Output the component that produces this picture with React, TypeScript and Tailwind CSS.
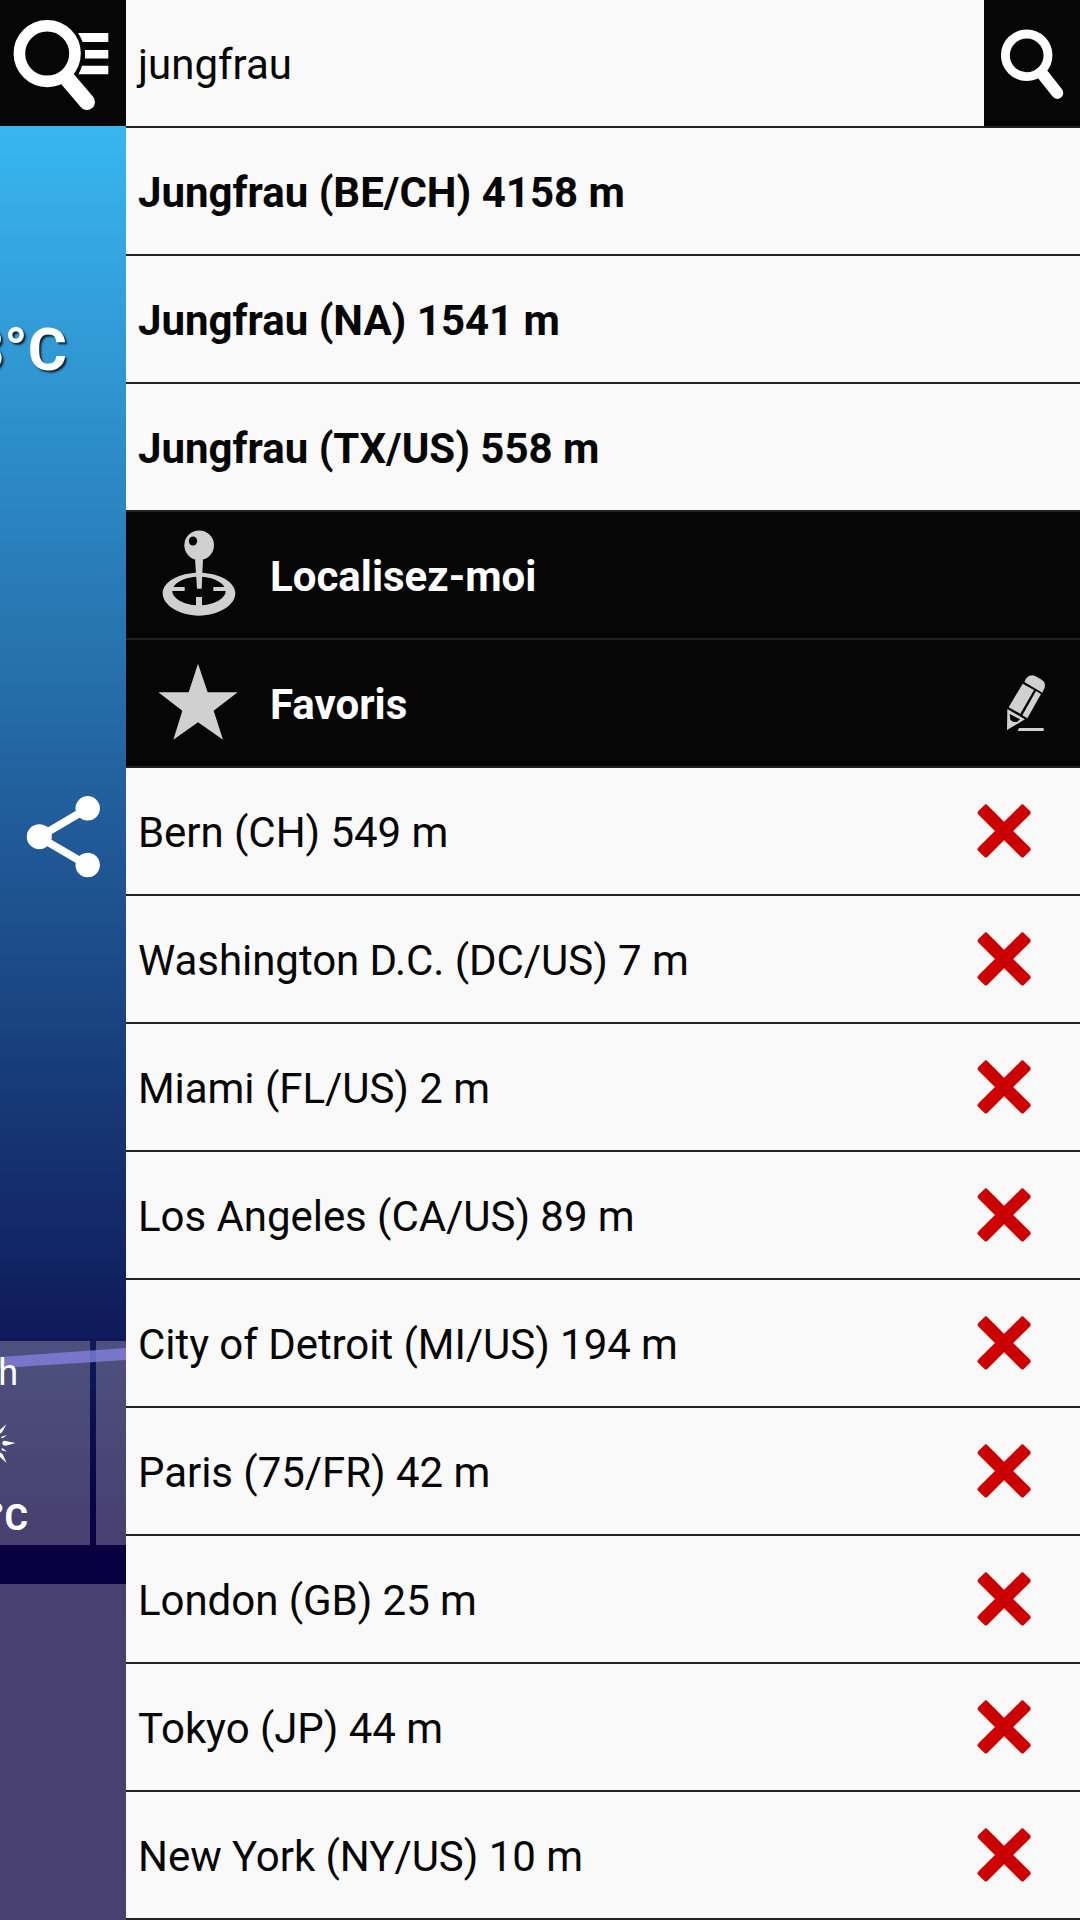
import type { ReactNode } from "react";

const results = [
  "Jungfrau (BE/CH) 4158 m",
  "Jungfrau (NA) 1541 m",
  "Jungfrau (TX/US) 558 m",
];

const favourites = [
  "Bern (CH) 549 m",
  "Washington D.C. (DC/US) 7 m",
  "Miami (FL/US) 2 m",
  "Los Angeles (CA/US) 89 m",
  "City of Detroit (MI/US) 194 m",
  "Paris (75/FR) 42 m",
  "London (GB) 25 m",
  "Tokyo (JP) 44 m",
  "New York (NY/US) 10 m",
];

function SearchListIcon() {
  return (
    <svg className="block h-[126px] w-[126px]" viewBox="0 0 126 126" fill="none">
      <circle cx="47.2" cy="53.6" r="27.8" stroke="#fff" strokeWidth="11.6" />
      <path d="M67 78.5 87 102" stroke="#fff" strokeWidth="16" strokeLinecap="round" />
      <path
        d="M78 33h30.3v9H82.6Q81 37.500 78 33ZM85 50h23.300v8.500H85ZM82 65.700h26.300v8.600H78.500Q80.800 70 82 65.700Z"
        fill="#fff"
      />
    </svg>
  );
}

function SearchIcon() {
  return (
    <svg className="block h-[126px] w-[96px]" viewBox="0 0 96 126" fill="none">
      <circle cx="42.700" cy="55.300" r="21.300" stroke="#fff" strokeWidth="8.900" />
      <path d="M58 73.500 73.300 92.900" stroke="#fff" strokeWidth="12" strokeLinecap="round" />
    </svg>
  );
}

function ShareIcon() {
  return (
    <svg className="block h-[96px] w-[126px] shrink-0" viewBox="0 0 126 96" fill="#fff">
      <path d="M87.700 19.300 39.300 48l48.400 28.300" fill="none" stroke="#fff" strokeWidth="7.800" />
      <circle cx="87.700" cy="19.300" r="12.200" />
      <circle cx="39.300" cy="47.700" r="12.500" />
      <circle cx="87.700" cy="76" r="12.200" />
    </svg>
  );
}

function LocateIcon() {
  return (
    <svg className="block h-[126px] w-[90px]" viewBox="108 36 270 378" fill="#d0d0d0">
      <path
        fillRule="evenodd"
        d="M237 218c60 0 109 27 109 62s-49 67-109 67-109-32-109-67 49-62 109-62ZM237 230c-46 0-80 21-80 43s34 43 80 43 80-21 80-43-34-43-80-43Z"
      />
      <path d="M155 261h39v12h-39ZM280 261h38v12h-38ZM228 291h18v30h-18Z" />
      <path d="M225 175h24l-4 91h-14Z" />
      <circle cx="237.500" cy="136" r="44.500" />
      <ellipse cx="219" cy="123" rx="12.500" ry="13.500" fill="#060606" />
    </svg>
  );
}

function StarIcon() {
  return (
    <svg className="block h-[126px] w-[90px]" viewBox="108 420 270 378" fill="#d0d0d0">
      <path d="M234 491 263 577H353L281 632 309 719 234 667 160 719 187 632 115 577H206Z" />
    </svg>
  );
}

function PencilIcon() {
  return (
    <svg className="block h-[126px] w-[60px]" viewBox="120 30 180 378" fill="#d0d0d0">
      <path d="M193 156 199 145Q209 132 224 137L245 149Q258 157 254 173L247 188Z" />
      <path d="M188 161 222 180 181 251 146 232Z" />
      <path d="M228 183 243 192 202 265 187 256Z" />
      <path fillRule="evenodd" d="M142 237 195 268 141 300ZM149 252 151 269 160 276 171 276 180 268Z" />
      <path d="M177 294H250Q254 298 250 303H173Z" />
    </svg>
  );
}

function DeleteIcon() {
  return (
    <svg className="block h-[126px] w-[70px]" viewBox="30 414 210 378" fill="#cc0000">
      <g transform="translate(132.500 603)">
        <rect x="-97" y="-19.500" width="194" height="39" rx="7" transform="rotate(45)" />
        <rect x="-97" y="-19.500" width="194" height="39" rx="7" transform="rotate(-45)" />
      </g>
    </svg>
  );
}

function SunRays() {
  return (
    <svg className="block h-[44px] w-[20px]" viewBox="0 0 60 132" fill="#fff">
      <path d="M47 66 17 74Q7 74 7 66T17 60ZM19 10 7 32-2 40V28ZM20 126 8 100-2 92V106ZM21 42 8 52Q2 52 4 47ZM21 92 6 88Q2 83 8 82Z" />
    </svg>
  );
}

function Row({ children, dark = false }: { children: ReactNode; dark?: boolean }) {
  return (
    <div
      className={
        dark
          ? "flex h-32 items-center border-b-2 border-[#222224] bg-[#060606] font-bold text-white"
          : "flex h-32 items-center border-b-2 border-[#222224] bg-[#f9f9f9] text-[#060606]"
      }
    >
      {children}
    </div>
  );
}

function WeatherStrip() {
  return (
    <aside className="flex h-full w-[126px] shrink-0 flex-col overflow-hidden bg-[#060606] text-white">
      <SearchListIcon />
      <div className="flex min-h-0 flex-1 flex-col bg-[linear-gradient(180deg,#38b6f0_0px,#080040_1414px)]">
        <div className="mt-[174px] flex h-[96px] w-[67px] shrink-0 justify-end self-start pt-[2px] text-[60px] leading-[96px] font-bold whitespace-nowrap [text-shadow:2px_2px_2px_#123]">
          3°C
        </div>
        <div className="mt-[393px]">
          <ShareIcon />
        </div>
        <div className="relative mt-[456px] flex h-[204px] shrink-0 gap-[6px]">
          <svg className="absolute top-0 left-0 z-10 h-[40px] w-[126px]" viewBox="0 0 126 40">
            <path d="M0 16 126 7V19L0 27Z" fill="#8481e2" fillOpacity=".78" />
          </svg>
          <div className="flex w-[90px] flex-col bg-[rgba(204,194,203,0.33)]">
            <div className="relative z-20 flex h-[64px] w-[18px] justify-end text-[36px] leading-[64px] whitespace-nowrap">
              15h
            </div>
            <div className="mt-[16px]">
              <SunRays />
            </div>
            <div className="mt-[21px] flex h-[64px] w-[28px] justify-end text-[36px] leading-[64px] font-bold whitespace-nowrap">
              13°C
            </div>
          </div>
          <div className="w-[30px] bg-[rgba(204,194,203,0.33)]" />
        </div>
        <div className="mt-[39px] flex-1 bg-[#48406e]" />
      </div>
    </aside>
  );
}

export default function App() {
  return (
    <div className="flex h-[1920px] w-[1080px] overflow-hidden bg-[#060606] font-[Roboto,sans-serif] text-[42px] leading-[50px]">
      <WeatherStrip />
      <main className="flex min-w-0 flex-1 flex-col">
        <Row>
          <span className="flex-1 pt-[3px] pl-[12px]">jungfrau</span>
          <span className="bg-[#060606]">
            <SearchIcon />
          </span>
        </Row>
        {results.map((name) => (
          <Row key={name}>
            <span className="pt-[3px] pl-[12px] font-bold">{name}</span>
          </Row>
        ))}
        <Row dark>
          <span className="ml-[30px]">
            <LocateIcon />
          </span>
          <span className="ml-6 pt-[3px]">Localisez-moi</span>
        </Row>
        <Row dark>
          <span className="ml-[30px]">
            <StarIcon />
          </span>
          <span className="ml-6 flex-1 pt-[3px]">Favoris</span>
          <span className="mr-5">
            <PencilIcon />
          </span>
        </Row>
        {favourites.map((name) => (
          <Row key={name}>
            <span className="flex-1 pt-[3px] pl-[12px] tracking-[-0.05px]">{name}</span>
            <span className="mr-10">
              <DeleteIcon />
            </span>
          </Row>
        ))}
      </main>
    </div>
  );
}
